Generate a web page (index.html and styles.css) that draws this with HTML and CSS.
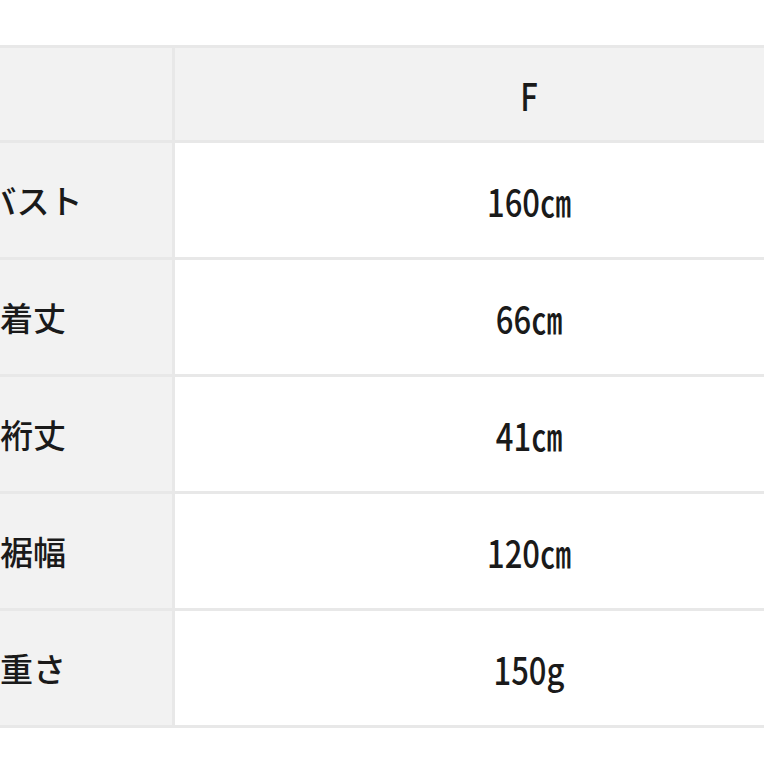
FILE: index.html
```html
<!DOCTYPE html>
<html lang="ja">
<head>
<meta charset="utf-8">
<title>サイズ表</title>
<link rel="stylesheet" href="styles.css">
</head>
<body>
<div class="sheet">
  <div class="size-table">
    <div class="cell label head"></div>
    <div class="cell value head"><span class="num">F</span></div>

    <div class="cell label">バスト</div>
    <div class="cell value"><span class="num">160㎝</span></div>

    <div class="cell label">着丈</div>
    <div class="cell value"><span class="num">66㎝</span></div>

    <div class="cell label">裄丈</div>
    <div class="cell value"><span class="num">41㎝</span></div>

    <div class="cell label">裾幅</div>
    <div class="cell value"><span class="num">120㎝</span></div>

    <div class="cell label">重さ</div>
    <div class="cell value"><span class="num">150g</span></div>
  </div>
</div>
</body>
</html>
```
FILE: styles.css
```css
html, body {
  margin: 0;
  padding: 0;
  background: #ffffff;
  overflow: hidden;
}
body {
  width: 764px;
  height: 764px;
  font-family: "Noto Sans CJK JP", "Noto Sans", sans-serif;
  color: #1a1a1a;
}
.sheet {
  padding-top: 45px;
  margin-left: -106px;
}
.size-table {
  display: grid;
  grid-template-columns: 278px 708px;
  grid-template-rows: 92px repeat(5, 114px);
  gap: 3px;
  padding: 3px 0;
  background: #e8e8e8;
  width: 989px;
}
.cell {
  display: flex;
  align-items: center;
  justify-content: center;
  white-space: nowrap;
}
.label {
  background: #f2f2f2;
  font-size: 33px;
  font-weight: 500;
  line-height: 1;
}
.value {
  background: #ffffff;
}
.value.head {
  background: #f2f2f2;
}
.num {
  display: inline-block;
  font-size: 31px;
  font-weight: 500;
  line-height: 1;
  transform: scaleY(1.22);
}
```
